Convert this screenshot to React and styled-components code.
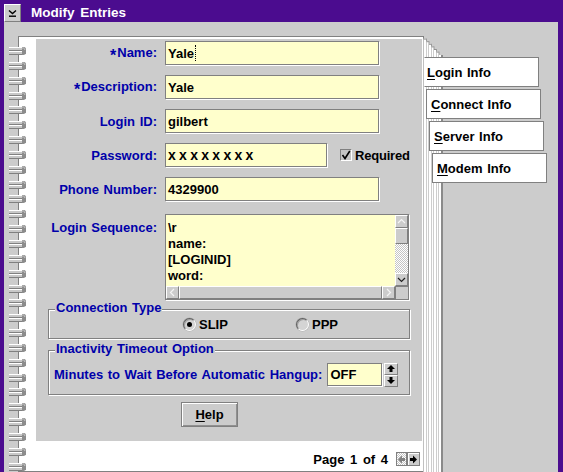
import React from "react";
import styled, { createGlobalStyle } from "styled-components";

const GlobalStyle = createGlobalStyle`
  html, body {
    margin: 0;
    padding: 0;
    background: #cccccc;
  }
  body {
    font-family: "Liberation Sans", Arial, sans-serif;
    font-weight: bold;
    font-size: 13px;
  }
  * {
    box-sizing: border-box;
  }
`;

const PURPLE = "#4b0c8f";
const BLUE = "#0000aa";
const YELLOW = "#ffffcc";
const DITHER = `repeating-conic-gradient(#ffffff 0 25%, #c4c4c4 0 50%) 0 0 / 2px 2px`;

const Window = styled.div`
  width: 563px;
  height: 472px;
  display: flex;
  flex-direction: column;
  background: #cccccc;
  border-left: 4px solid ${PURPLE};
  border-right: 5px solid ${PURPLE};
  overflow: hidden;
`;

const TitleBar = styled.div`
  height: 22px;
  flex: none;
  display: flex;
  align-items: flex-start;
  padding-top: 4px;
  background: ${PURPLE};
`;

const SysMenu = styled.div`
  width: 17px;
  height: 18px;
  background: #cccccc;
  border: 1px solid;
  border-color: #ffffff #808080 #808080 #ffffff;
  display: flex;
  align-items: center;
  justify-content: center;
`;

const Title = styled.div`
  margin-left: 10px;
  line-height: 18px;
  color: #ffffff;
  font-size: 13.5px;
  word-spacing: 2px;
`;

const Client = styled.div`
  flex: 1;
  display: flex;
  padding-top: 14px;
  min-height: 0;
`;

const Spiral = styled.div`
  position: relative;
  z-index: 1;
  width: 22px;
  margin-right: -8px;
  flex: none;
  display: flex;
  flex-direction: column;
  gap: 6.85px;
  padding: 11px 0 0 5px;
  overflow: hidden;
`;

const Page = styled.div`
  width: 405px;
  flex: none;
  display: flex;
  flex-direction: column;
  background: #ffffff;
  border-top: 1px solid #808080;
  border-left: 1px solid #808080;
  border-bottom: 1px solid #808080;
  padding: 2px 1px 0 17px;
`;

const Panel = styled.div`
  height: 402px;
  flex: none;
  background: #cccccc;
  display: flex;
  flex-direction: column;
`;

const Footer = styled.div`
  flex: 1;
  display: flex;
  justify-content: flex-end;
  align-items: center;
  gap: 8px;
  padding: 6px 2px 0 0;
  color: #000000;
  word-spacing: 2px;
`;

const PageArrows = styled.div`
  display: flex;
`;

const PageArrow = styled.div`
  width: ${({ $w }) => $w}px;
  height: 14px;
  display: flex;
  align-items: center;
  justify-content: center;
  background: ${({ $off }) => ($off ? DITHER : "#cccccc")};
  border: 1px solid #808080;
  box-shadow: ${({ $off }) => ($off ? "none" : "inset 1px 1px 0 #ffffff")};
`;

const FormRow = styled.div`
  display: grid;
  grid-template-columns: 121px auto;
  column-gap: 8px;
  align-items: ${({ $top }) => ($top ? "start" : "center")};
  margin-top: ${({ $mt }) => $mt}px;
`;

const Label = styled.div`
  color: ${BLUE};
  text-align: right;
  white-space: nowrap;
  word-spacing: 1px;
  line-height: 15px;
  padding-top: ${({ $pt }) => $pt || 0}px;
`;

const Star = styled.span`
  font-size: 16px;
  line-height: 10px;
  vertical-align: -4px;
  margin-right: 1px;
`;

const FieldLine = styled.div`
  display: flex;
  align-items: center;
`;

const Field = styled.div`
  width: ${({ $w }) => $w}px;
  height: ${({ $h }) => $h || 24}px;
  background: ${YELLOW};
  border: 1px solid #808080;
  box-shadow: 1px 1px 0 #ffffff;
  padding-left: 2px;
  display: flex;
  align-items: center;
  color: #000000;
  white-space: nowrap;
  font-size: ${({ $fs }) => $fs || 13}px;
  letter-spacing: ${({ $ls }) => $ls || 0}px;
`;

const Caret = styled.span`
  display: inline-block;
  width: 1px;
  height: 16px;
  margin-left: 1px;
  border-left: 1px dotted #000000;
`;

const Check = styled.div`
  width: 12px;
  height: 12px;
  margin-left: 13px;
  background: #c4c4c4;
  border: 1px solid;
  border-color: #808080 #ffffff #ffffff #808080;
  display: flex;
  align-items: center;
  justify-content: center;
`;

const CheckText = styled.span`
  margin-left: 3px;
  color: #000000;
  letter-spacing: -0.2px;
`;

const TextBox = styled.div`
  width: 244px;
  height: 86px;
  background: ${YELLOW};
  border: 1px solid #808080;
  box-shadow: 1px 1px 0 #ffffff;
  display: grid;
  grid-template-columns: 1fr 13px;
  grid-template-rows: 1fr 13px;
`;

const TextLines = styled.div`
  padding: 5px 0 0 2px;
  line-height: 16px;
  overflow: hidden;
  color: #000000;
  white-space: pre;
`;

const VScroll = styled.div`
  display: flex;
  flex-direction: column;
  background: ${DITHER};
`;

const HScroll = styled.div`
  display: flex;
  background: #cccccc;
`;

const ScrollBtn = styled.div`
  width: 13px;
  height: 13px;
  flex: none;
  background: #cccccc;
  border: 1px solid;
  border-color: #ffffff #808080 #808080 #ffffff;
  display: flex;
  align-items: center;
  justify-content: center;
`;

const Thumb = styled.div`
  ${({ $vertical }) => ($vertical ? "height: 16px; width: 13px;" : "flex: 1;")}
  flex-shrink: 0;
  background: #cccccc;
  border: 1px solid;
  border-color: #ffffff #808080 #808080 #ffffff;
`;

const Track = styled.div`
  flex: 1;
`;

const Corner = styled.div`
  background: #cccccc;
  border-left: 1px solid #808080;
  border-top: 1px solid #808080;
`;

const Group = styled.div`
  display: flex;
  flex-direction: column;
  width: 362px;
  margin: ${({ $mt }) => $mt}px 0 0 12px;
`;

const Legend = styled.div`
  position: relative;
  z-index: 1;
  align-self: flex-start;
  margin: 0 0 -6px 7px;
  padding: 0 1px;
  line-height: 15px;
  background: #cccccc;
  color: ${BLUE};
  word-spacing: 1px;
`;

const Frame = styled.div`
  height: ${({ $h }) => $h}px;
  border: 1px solid #808080;
  box-shadow: inset 1px 1px 0 #ffffff, 1px 1px 0 #ffffff;
  display: flex;
  align-items: center;
  padding: ${({ $pad }) => $pad};
`;

const RadioOption = styled.div`
  width: ${({ $w }) => ($w ? `${$w}px` : "auto")};
  display: flex;
  align-items: center;
  gap: 3px;
  color: #000000;
`;

const RadioCircle = styled.div`
  width: 13px;
  height: 13px;
  border-radius: 50%;
  background: #d4d4d4;
  border: 1px solid;
  border-color: #606060 #ffffff #ffffff #606060;
  box-shadow: inset 1px 1px 0 #a0a0a0, 0 0 0 0.5px #b0b0b0;
  display: flex;
  align-items: center;
  justify-content: center;
`;

const RadioDot = styled.div`
  width: 5px;
  height: 5px;
  border-radius: 50%;
  background: #000000;
`;

const WaitLabel = styled.span`
  color: ${BLUE};
  word-spacing: 1px;
  margin-right: 5px;
`;

const Spinner = styled.div`
  margin-left: 2px;
  display: flex;
  flex-direction: column;
`;

const SpinBtn = styled.div`
  width: 14px;
  height: 12px;
  background: #cccccc;
  border: 1px solid;
  border-color: #ffffff #808080 #808080 #ffffff;
  display: flex;
  align-items: center;
  justify-content: center;
`;

const HelpButton = styled.div`
  width: 57px;
  height: 25px;
  margin: 7px 0 0 145px;
  background: #cccccc;
  border: 1px solid #808080;
  box-shadow: inset 1px 1px 0 #ffffff, inset -1px -1px 0 #909090;
  display: flex;
  align-items: center;
  justify-content: center;
  color: #000000;
`;

const Mnemonic = styled.span`
  text-decoration: underline;
  text-underline-offset: 2px;
`;

const TabArea = styled.div`
  display: flex;
  flex: none;
`;

const TabColumn = styled.div`
  margin-left: -21px;
  padding-top: 21px;
  display: flex;
  flex-direction: column;
  gap: 2px;
`;

const Tab = styled.div`
  width: 115px;
  height: 30px;
  margin-left: ${({ $shift }) => $shift}px;
  background: #ffffff;
  border: 1px solid #808080;
  border-left-color: ${({ $active }) => ($active ? "#ffffff" : "#808080")};
  padding-left: ${({ $active }) => ($active ? 2 : 4)}px;
  display: flex;
  align-items: center;
  color: #000000;
  word-spacing: 1px;
`;

const Ring = () => (
  <svg width="18" height="8" viewBox="0 0 18 8" style={{ flex: "none" }}>
    <rect x="0" y="0" width="14" height="3" fill="#c8c8c8" />
    <rect x="0" y="0" width="14" height="1" fill="#ffffff" />
    <rect x="0" y="3" width="14" height="1" fill="#808080" />
    <rect x="0" y="4" width="14" height="3" fill="#c8c8c8" />
    <rect x="0" y="4" width="14" height="1" fill="#ffffff" />
    <rect x="0" y="7" width="14" height="1" fill="#808080" />
    <path d="M13 0 h1.5 a3 4 0 0 1 0 8 h-1.5 z" fill="#8c8c8c" />
    <path d="M13 1 h1.5 a2 3 0 0 1 1.5 2" fill="none" stroke="#d8d8d8" strokeWidth="0.8" />
  </svg>
);

const SysIcon = () => (
  <svg width="11" height="10" viewBox="0 0 11 10">
    <path d="M2 2.5 L5.5 5.5 L9 2.5" fill="none" stroke="#000" strokeWidth="1.4" />
    <rect x="2" y="7.5" width="7" height="1.4" fill="#000" />
  </svg>
);

const Chevron = ({ dir, color }) => {
  const d = {
    up: "M2 7 L5.5 3.5 L9 7",
    down: "M2 4 L5.5 7.5 L9 4",
    left: "M7 2 L3.5 5.5 L7 9",
    right: "M4 2 L7.5 5.5 L4 9",
  }[dir];
  return (
    <svg width="11" height="11" viewBox="0 0 11 11">
      <path d={d} fill="none" stroke={color} strokeWidth="1.2" />
    </svg>
  );
};

const CheckMark = () => (
  <svg width="10" height="10" viewBox="0 0 10 10">
    <path d="M1.5 5 L4 8.5 L8.8 1" fill="none" stroke="#000" strokeWidth="1.6" />
  </svg>
);

const SpinArrow = ({ down }) => (
  <svg width="10" height="9" viewBox="0 0 10 9">
    <path
      d={down ? "M5 8 L9 4 H6.5 V1 H3.5 V4 H1 Z" : "M5 1 L9 5 H6.5 V8 H3.5 V5 H1 Z"}
      fill="#000"
    />
  </svg>
);

const PageArrowIcon = ({ left, color }) => (
  <svg width="9" height="9" viewBox="0 0 9 9">
    <path
      d={left ? "M1 4.5 L5 0.5 V3 H8 V6 H5 V8.5 Z" : "M8 4.5 L4 0.5 V3 H1 V6 H4 V8.5 Z"}
      fill={color}
    />
  </svg>
);

// stacked page edges to the right of the notebook page
const PageEdges = () => {
  const xs = [0, 3, 5.5, 8, 10.5, 13, 15.5];
  const h = 436;
  return (
    <svg width="22" height={h} viewBox={`0 0 22 ${h}`} style={{ flex: "none" }}>
      {xs.map((x, i) => {
        const top = i * 2.6;
        const prev = i === 0 ? -1 : xs[i - 1];
        return (
          <g key={i}>
            <rect x={prev + 0.5} y={top} width={x - prev} height={h - top} fill="#ffffff" />
            <line x1={prev + 0.5} y1={top + 0.5} x2={x + 0.5} y2={top + 0.5} stroke="#909090" />
            <line x1={x + 0.5} y1={top} x2={x + 0.5} y2={h} stroke={i === 0 ? "#808080" : "#9a9a9a"} />
          </g>
        );
      })}
      <rect x="16" y="19" width="2" height={h - 19} fill="#ffffff" />
      <rect x="18" y="19" width="2" height={h - 19} fill="#8a8a8a" />
    </svg>
  );
};

const tabs = [
  { key: "L", rest: "ogin Info", shift: 0, active: true },
  { key: "C", rest: "onnect Info", shift: 2, active: false },
  { key: "S", rest: "erver Info", shift: 5, active: false },
  { key: "M", rest: "odem Info", shift: 8, active: false },
];

const App = () => {
  return (
    <>
      <GlobalStyle />
      <Window>
        <TitleBar>
          <SysMenu>
            <SysIcon />
          </SysMenu>
          <Title>Modify Entries</Title>
        </TitleBar>

        <Client>
          <Spiral>
            {Array.from({ length: 29 }).map((_, i) => (
              <Ring key={i} />
            ))}
          </Spiral>

          <Page>
            <Panel>
              <FormRow $mt={2}>
                <Label>
                  <Star>*</Star>Name:
                </Label>
                <Field $w={214}>
                  Yale
                  <Caret />
                </Field>
              </FormRow>

              <FormRow $mt={10}>
                <Label>
                  <Star>*</Star>Description:
                </Label>
                <Field $w={214}>Yale</Field>
              </FormRow>

              <FormRow $mt={10}>
                <Label>Login ID:</Label>
                <Field $w={214}>gilbert</Field>
              </FormRow>

              <FormRow $mt={10}>
                <Label>Password:</Label>
                <FieldLine>
                  <Field $w={162} $ls={3.3} $fs={14}>
                    xxxxxxxx
                  </Field>
                  <Check>
                    <CheckMark />
                  </Check>
                  <CheckText>Required</CheckText>
                </FieldLine>
              </FormRow>

              <FormRow $mt={10}>
                <Label>Phone Number:</Label>
                <Field $w={214}>4329900</Field>
              </FormRow>

              <FormRow $mt={13} $top>
                <Label $pt={6}>Login Sequence:</Label>
                <TextBox>
                  <TextLines>{"\\r\nname:\n[LOGINID]\nword:\n[PASSWORD]"}</TextLines>
                  <VScroll>
                    <ScrollBtn>
                      <Chevron dir="up" color="#f4f4f4" />
                    </ScrollBtn>
                    <Thumb $vertical />
                    <Track />
                    <ScrollBtn>
                      <Chevron dir="down" color="#202020" />
                    </ScrollBtn>
                  </VScroll>
                  <HScroll>
                    <ScrollBtn>
                      <Chevron dir="left" color="#f4f4f4" />
                    </ScrollBtn>
                    <Thumb />
                    <ScrollBtn>
                      <Chevron dir="right" color="#f4f4f4" />
                    </ScrollBtn>
                  </HScroll>
                  <Corner />
                </TextBox>
              </FormRow>

              <Group $mt={0}>
                <Legend>Connection Type</Legend>
                <Frame $h={30} $pad="0 0 0 134px">
                  <RadioOption $w={113}>
                    <RadioCircle>
                      <RadioDot />
                    </RadioCircle>
                    SLIP
                  </RadioOption>
                  <RadioOption>
                    <RadioCircle />
                    PPP
                  </RadioOption>
                </Frame>
              </Group>

              <Group $mt={2}>
                <Legend>Inactivity Timeout Option</Legend>
                <Frame $h={45} $pad="4px 0 0 5px">
                  <WaitLabel>Minutes to Wait Before Automatic Hangup:</WaitLabel>
                  <Field $w={55} $h={23}>
                    OFF
                  </Field>
                  <Spinner>
                    <SpinBtn>
                      <SpinArrow />
                    </SpinBtn>
                    <SpinBtn>
                      <SpinArrow down />
                    </SpinBtn>
                  </Spinner>
                </Frame>
              </Group>

              <HelpButton>
                <span>
                  <Mnemonic>H</Mnemonic>elp
                </span>
              </HelpButton>
            </Panel>

            <Footer>
              <span>Page 1 of 4</span>
              <PageArrows>
                <PageArrow $w={11} $off>
                  <PageArrowIcon left color="#808080" />
                </PageArrow>
                <PageArrow $w={13}>
                  <PageArrowIcon color="#000000" />
                </PageArrow>
              </PageArrows>
            </Footer>
          </Page>

          <TabArea>
            <PageEdges />
            <TabColumn>
              {tabs.map((t) => (
                <Tab key={t.key} $shift={t.shift} $active={t.active}>
                  <span>
                    <Mnemonic>{t.key}</Mnemonic>
                    {t.rest}
                  </span>
                </Tab>
              ))}
            </TabColumn>
          </TabArea>
        </Client>
      </Window>
    </>
  );
};

export default App;
